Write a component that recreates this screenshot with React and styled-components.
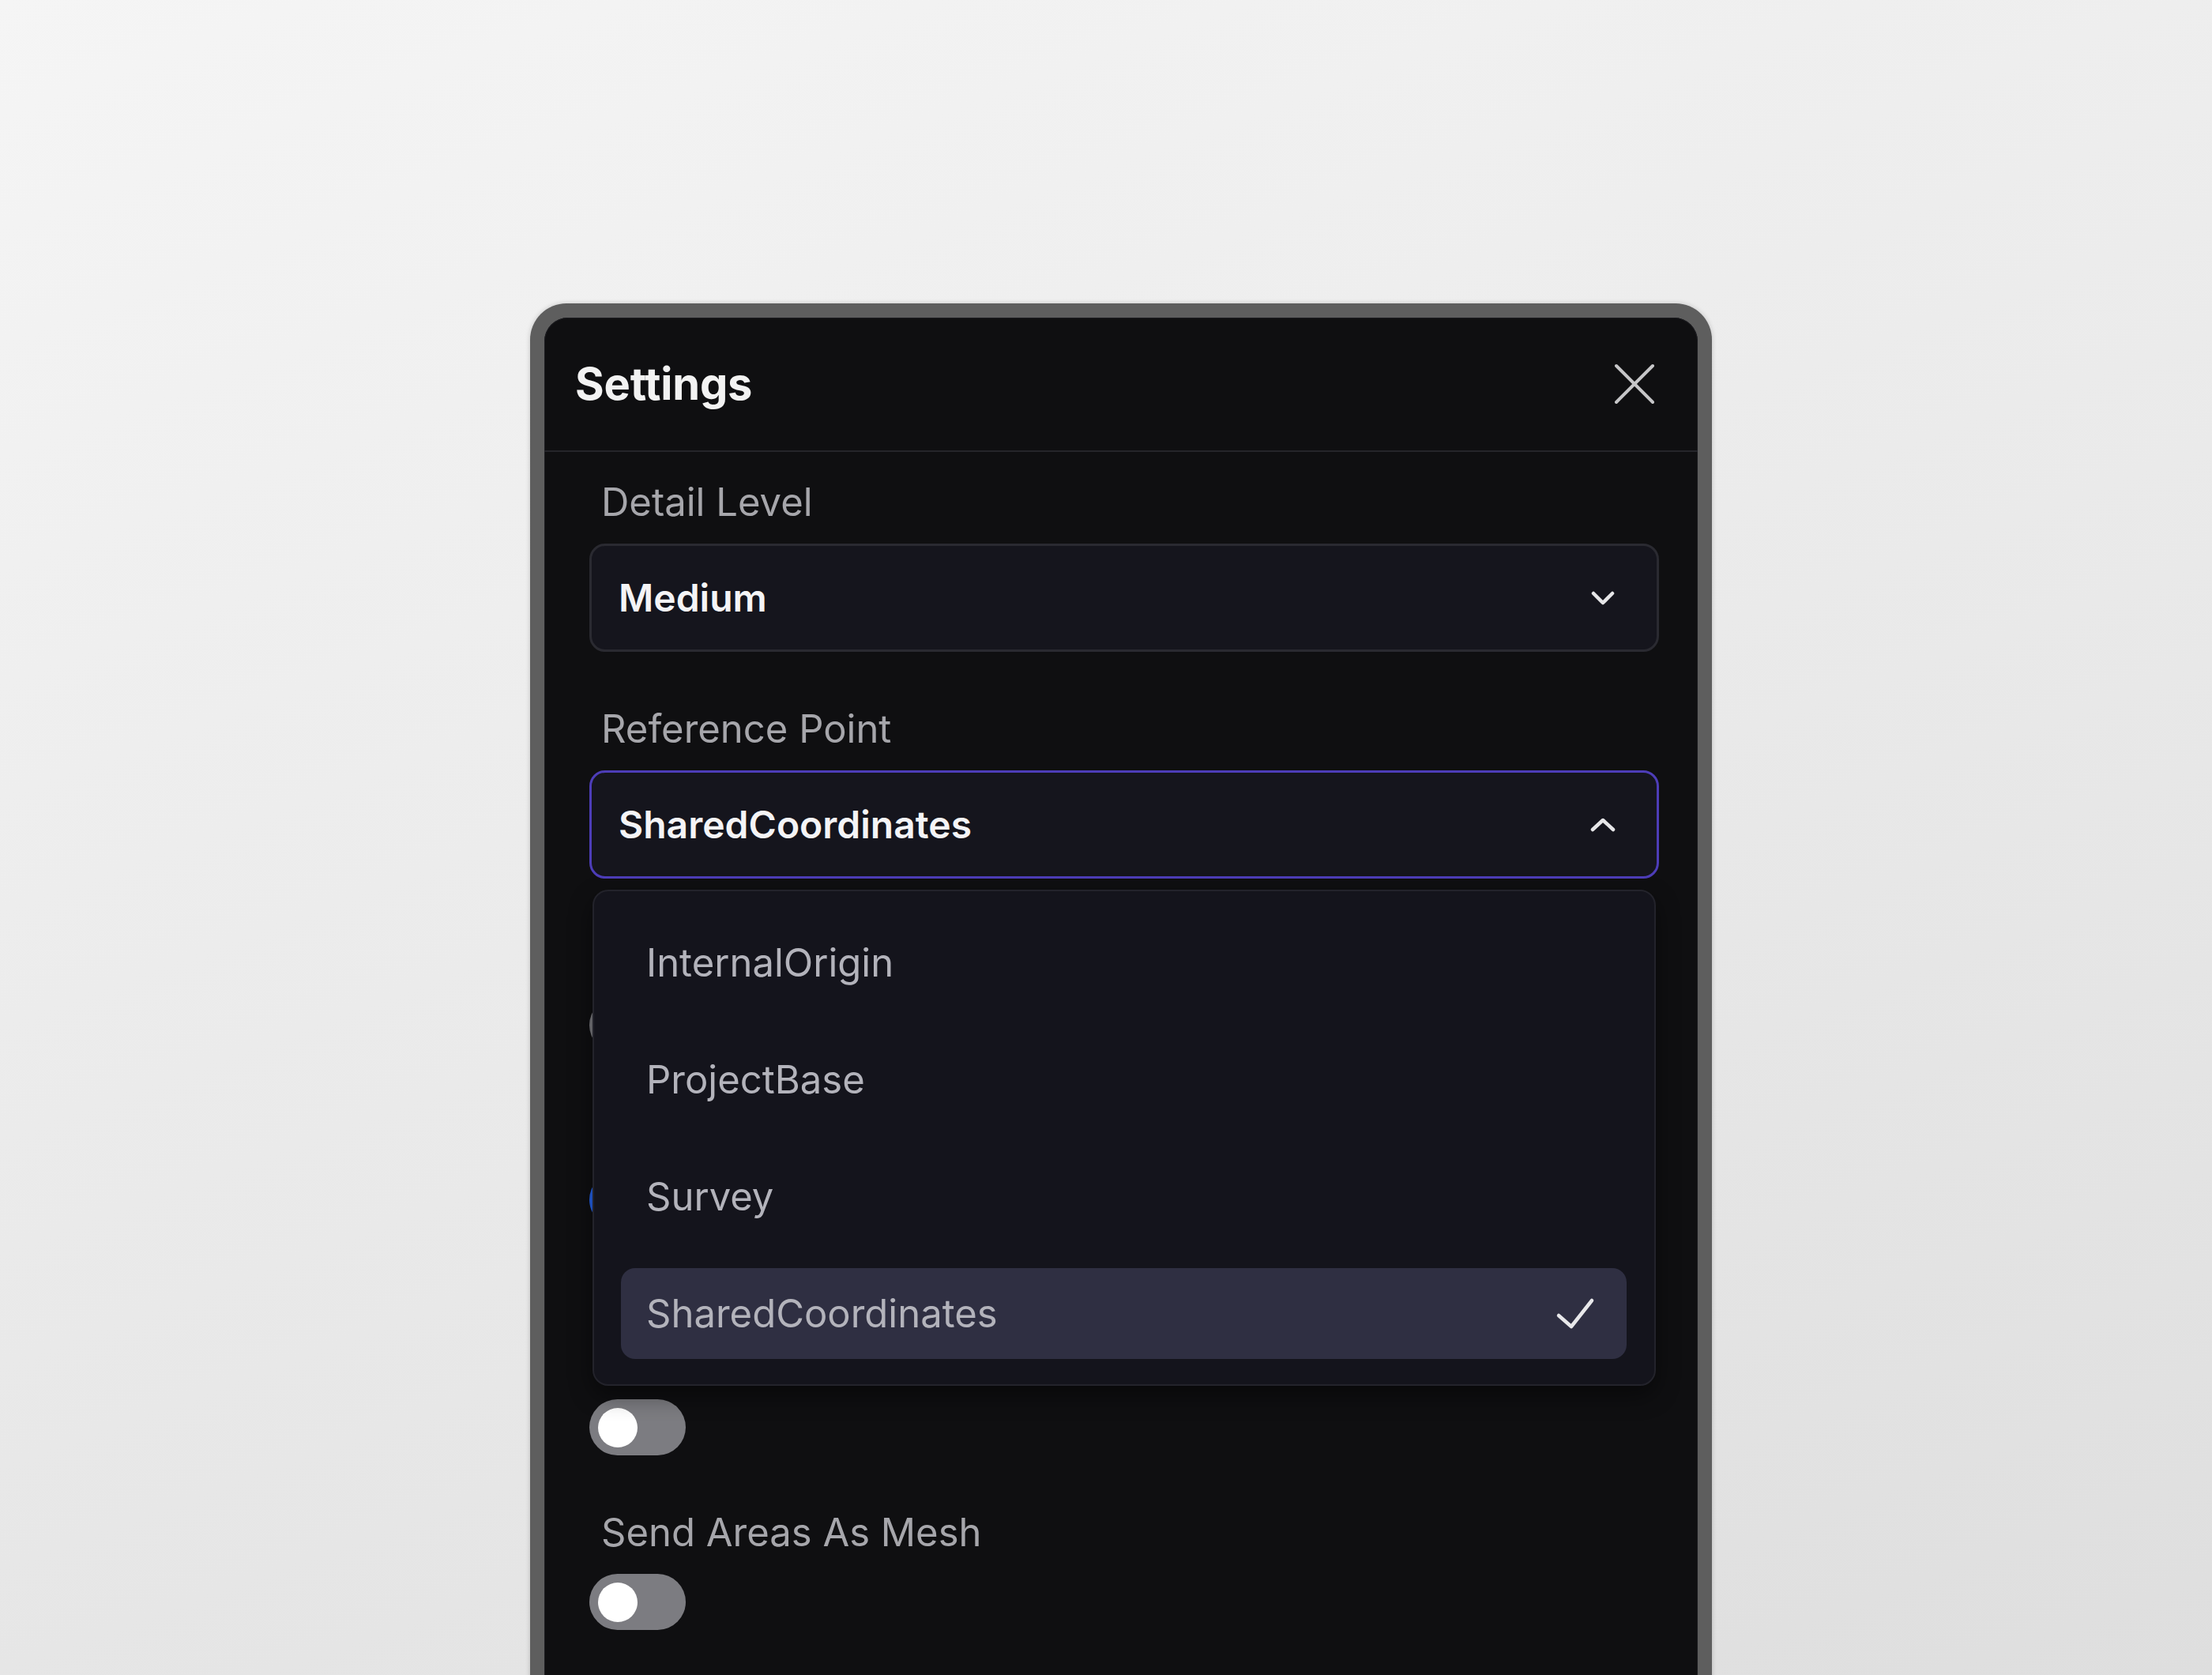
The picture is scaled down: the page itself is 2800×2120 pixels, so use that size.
import React from 'react'
import styled, { createGlobalStyle } from 'styled-components'

const GlobalStyle = createGlobalStyle`
  html, body {
    margin: 0;
    height: 2120px;
    overflow: hidden;
  }
  body {
    background: linear-gradient(160deg, #f5f5f5 0%, #e9e9e9 55%, #dedede 100%);
    font-family: Inter, 'Noto Sans', sans-serif;
    -webkit-font-smoothing: antialiased;
  }
`

const Page = styled.div`
  padding: 384px 0 0 671px;
`

const Frame = styled.div`
  width: 1496px;
  height: 1800px;
  box-sizing: border-box;
  padding: 18px 18px 0;
  background: #5e5e5e;
  border-radius: 46px 46px 0 0;
  box-shadow: 0 0 6px rgba(0, 0, 0, 0.18);
`

const Panel = styled.div`
  height: 100%;
  background: #0f0f11;
  border-radius: 30px 30px 0 0;
  box-shadow: inset 0 0 0 1px #1c1c20;
  display: flex;
  flex-direction: column;
`

const Header = styled.header`
  height: 168px;
  flex-shrink: 0;
  display: flex;
  align-items: center;
  justify-content: space-between;
  padding: 0 54px 0 39px;
  border-bottom: 2px solid #25252a;
`

const Title = styled.h2`
  margin: 0;
  font-size: 56px;
  font-weight: 700;
  color: #f2f2f2;
  letter-spacing: -0.2px;
`

const CloseButton = styled.button`
  display: flex;
  padding: 0;
  border: 0;
  background: none;
  color: #c6c6c8;
  cursor: pointer;
`

const Body = styled.div`
  display: flex;
  flex-direction: column;
  gap: 69px;
  padding: 35px 49px 0 57px;
`

const Field = styled.div`
  display: flex;
  flex-direction: column;
  align-items: flex-start;
`

const Label = styled.label`
  font-size: 49px;
  line-height: 58px;
  color: #a6a6ab;
  padding-left: 15px;
  margin-bottom: 23px;
`

const SelectWrap = styled.div`
  position: relative;
  align-self: stretch;
`

const SelectBox = styled.div`
  height: 137px;
  box-sizing: border-box;
  display: flex;
  align-items: center;
  justify-content: space-between;
  padding: 0 52px 0 34px;
  background: #15151d;
  border: 3px solid ${({ $open }) => ($open ? '#4d3db8' : '#2a2a31')};
  border-radius: 20px;
  font-size: 48px;
  font-weight: 600;
  color: #f4f4f6;
`

const Menu = styled.ul`
  position: absolute;
  top: calc(100% + 14px);
  left: 4px;
  right: 4px;
  z-index: 2;
  margin: 0;
  list-style: none;
  display: flex;
  flex-direction: column;
  gap: 33px;
  padding: 33px 35px 32px 34px;
  background: #14141c;
  border: 2px solid #23232b;
  border-radius: 20px;
  box-shadow: 0 12px 30px rgba(0, 0, 0, 0.45);
`

const Option = styled.li`
  height: 115px;
  display: flex;
  align-items: center;
  justify-content: space-between;
  padding: 0 39px 0 32px;
  border-radius: 18px;
  background: ${({ $selected }) => ($selected ? '#2f2f42' : 'transparent')};
  font-size: 49px;
  color: #b3b3bb;
`

const Toggle = styled.div`
  width: 122px;
  height: 71px;
  box-sizing: border-box;
  display: flex;
  align-items: center;
  justify-content: ${({ $on }) => ($on ? 'flex-end' : 'flex-start')};
  padding: 0 11px;
  margin-bottom: ${({ $spaceAfter }) => $spaceAfter || 0}px;
  border-radius: 36px;
  background: ${({ $on }) => ($on ? '#2563eb' : '#7c7c81')};
`

const Knob = styled.span`
  width: 50px;
  height: 50px;
  border-radius: 50%;
  background: #ffffff;
`

const CloseIcon = () => (
  <svg width="52" height="52" viewBox="0 0 52 52" fill="none">
    <path d="M3 3L49 49M49 3L3 49" stroke="currentColor" strokeWidth="4" strokeLinecap="round" />
  </svg>
)

const Chevron = ({ up }) => (
  <svg width="32" height="20" viewBox="0 0 32 20" fill="none">
    <polyline
      points={up ? '3,16 16,4 29,16' : '4,4 16,16 28,4'}
      stroke="#e6e6e8"
      strokeWidth="4.5"
      strokeLinecap="round"
      strokeLinejoin="round"
    />
  </svg>
)

const Check = () => (
  <svg width="52" height="44" viewBox="0 0 52 44" fill="none">
    <polyline
      points="5,24 21,38 47,5"
      stroke="#e8e8ea"
      strokeWidth="4.5"
      strokeLinecap="round"
      strokeLinejoin="round"
    />
  </svg>
)

const referencePoints = ['InternalOrigin', 'ProjectBase', 'Survey', 'SharedCoordinates']

const Select = ({ value, open, options }) => (
  <SelectWrap>
    <SelectBox $open={open}>
      <span>{value}</span>
      <Chevron up={open} />
    </SelectBox>
    {open && (
      <Menu>
        {options.map((option) => (
          <Option key={option} $selected={option === value}>
            <span>{option}</span>
            {option === value && <Check />}
          </Option>
        ))}
      </Menu>
    )}
  </SelectWrap>
)

// the fields under the open menu keep their place; only the switch edges peek out
const ToggleField = ({ label, on, spaceAfter }) => (
  <Field>
    <Label>{label}</Label>
    <Toggle $on={on} $spaceAfter={spaceAfter}>
      <Knob />
    </Toggle>
  </Field>
)

const App = () => (
  <>
    <GlobalStyle />
    <Page>
      <Frame>
        <Panel>
          <Header>
            <Title>Settings</Title>
            <CloseButton aria-label="Close">
              <CloseIcon />
            </CloseButton>
          </Header>
          <Body>
            <Field>
              <Label>Detail Level</Label>
              <Select value="Medium" />
            </Field>
            <Field>
              <Label>Reference Point</Label>
              <Select value="SharedCoordinates" open options={referencePoints} />
            </Field>
            <ToggleField label="Include Linked Models" />
            <ToggleField label="Send Rooms" on spaceAfter={67} />
            <ToggleField label="Send Parameters" />
            <ToggleField label="Send Areas As Mesh" />
          </Body>
        </Panel>
      </Frame>
    </Page>
  </>
)

export default App
